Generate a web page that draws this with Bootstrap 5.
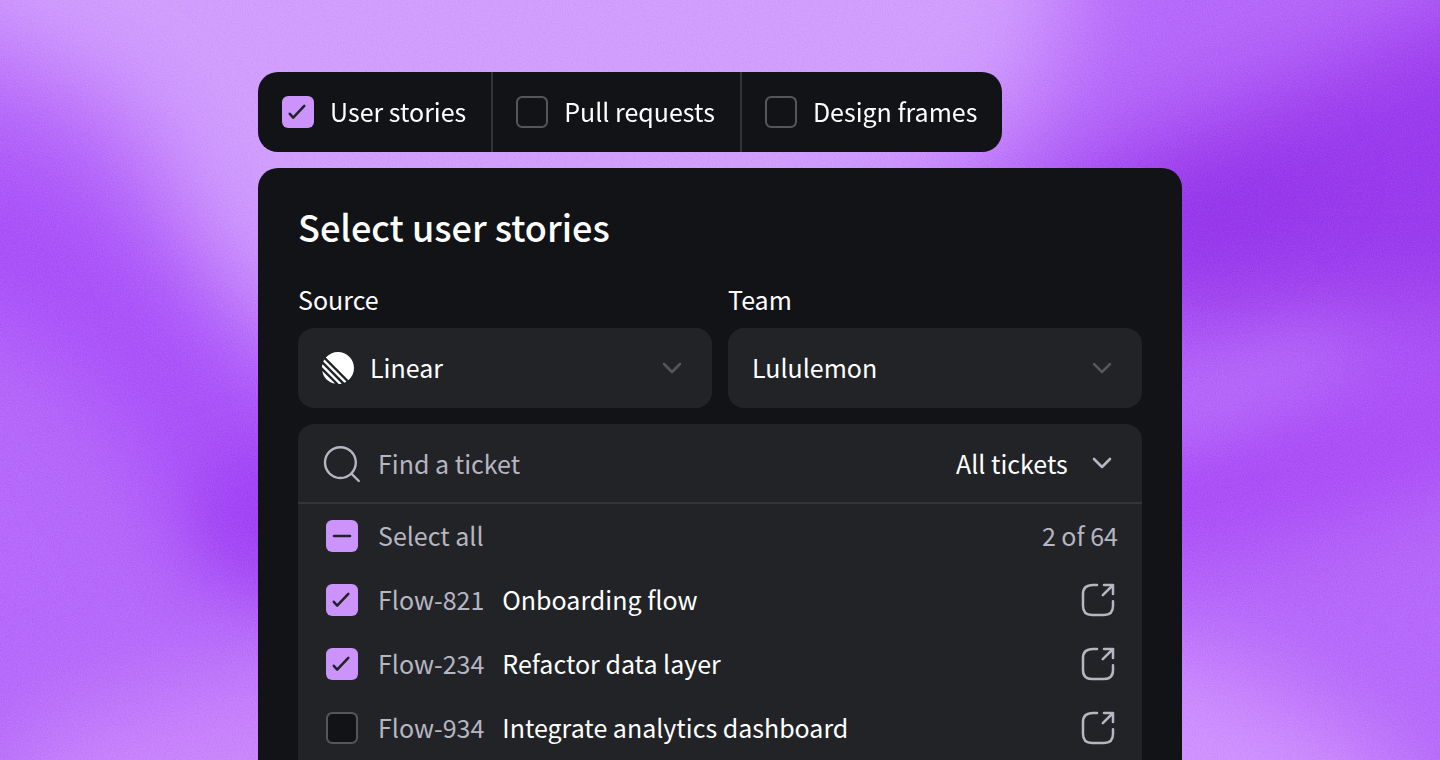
<!DOCTYPE html>
<html lang="en">
<head>
<meta charset="utf-8">
<meta name="viewport" content="width=device-width, initial-scale=1">
<title>Select user stories</title>
<link href="https://cdn.jsdelivr.net/npm/bootstrap@5.3.0/dist/css/bootstrap.min.css" rel="stylesheet">
<style>
  :root {
    --ink: #121317;
    --surface: #222326;
    --line: #333437;
    --outline: #56565a;
    --muted: #b6b5c2;
    --accent: #cc93fc;
  }
  body {
    font-family: "Noto Sans CJK SC", "Noto Sans", sans-serif;
    font-size: 25px;
    line-height: 32px;
    color: #fff;
    background: #b566f8;
  }
  .backdrop { position: fixed; inset: 0; width: 100%; height: 100%; z-index: -1; }
  .stage { max-width: 924px; padding-top: 72px; gap: 16px; }
  .ink { background: var(--ink); }
  .surface { background: var(--surface); }
  .text-soft { color: var(--muted); }

  .kind-tabs { border-radius: 20px; height: 80px; }
  .kind-tab { gap: 16px; padding: 0 25px 0 24px; cursor: pointer; }
  .kind-tab + .kind-tab { border-left: 2px solid var(--line); padding-left: 23px; }
  .kind-tab span, .ticket-row span, .ticket-row label { padding-bottom: 2px; }
  .ticket-row label span { padding-bottom: 0; }

  .form-check-input {
    width: 32px; height: 32px; margin: 0; flex: none;
    border: 2px solid var(--outline); border-radius: 8px;
    background-color: var(--ink);
    background-origin: border-box; background-size: 32px 32px;
  }
  .form-check-input:checked, .form-check-input:indeterminate {
    background-color: var(--accent); border-color: transparent; background-clip: border-box;
  }
  .form-check-input:checked[type=checkbox] {
    background-image: url("data:image/svg+xml,%3csvg xmlns='http://www.w3.org/2000/svg' viewBox='0 0 32 32'%3e%3cpath fill='none' stroke='%23222326' stroke-width='2.5' stroke-linecap='round' stroke-linejoin='round' d='M7.8 17.8 11.2 21.6 22.3 9.8'/%3e%3c/svg%3e");
  }
  .form-check-input:indeterminate[type=checkbox] {
    background-color: var(--accent); border-color: transparent;
    background-image: url("data:image/svg+xml,%3csvg xmlns='http://www.w3.org/2000/svg' viewBox='0 0 32 32'%3e%3cpath fill='none' stroke='%23222326' stroke-width='2.6' stroke-linecap='round' d='M8 16H24'/%3e%3c/svg%3e");
  }

  .picker { border-radius: 20px 20px 0 0; padding: 40px 40px 0; }
  .picker-title { font-size: 36px; line-height: 36px; font-weight: 500; margin-bottom: 39px; }
  .field-label { margin-bottom: 13px; }
  .field-box { border-radius: 16px; height: 80px; padding-left: 24px; gap: 16px; }

  .form-select {
    --bs-form-select-bg-img: url("data:image/svg+xml,%3csvg xmlns='http://www.w3.org/2000/svg' viewBox='0 0 32 32'%3e%3cpath fill='none' stroke='%2356565a' stroke-width='2.5' stroke-linecap='round' stroke-linejoin='round' d='M8 12 16 20 24 12'/%3e%3c/svg%3e");
    height: 80px; padding: 0 72px 2px 0; border: 0; border-radius: 16px;
    font-size: 25px; line-height: 32px; color: #fff;
    background-color: transparent;
    background-image: var(--bs-form-select-bg-img);
    background-position: right 24px center; background-size: 32px 32px;
  }
  .form-select option { background: var(--surface); }
  .filter-select {
    --bs-form-select-bg-img: url("data:image/svg+xml,%3csvg xmlns='http://www.w3.org/2000/svg' viewBox='0 0 32 32'%3e%3cpath fill='none' stroke='%23b6b5c2' stroke-width='2.6' stroke-linecap='round' stroke-linejoin='round' d='M8 12 16 20 24 12'/%3e%3c/svg%3e");
    padding: 0 74px 0 0;
  }

  .tickets { border-radius: 16px 16px 0 0; margin-top: 16px; }
  .ticket-search { height: 80px; border-bottom: 2px solid var(--line); padding-left: 24px; gap: 16px; }
  .ticket-search .form-control {
    padding: 0; border: 0; border-radius: 0; background: transparent; box-shadow: none;
    font-size: 25px; line-height: 32px; min-width: 0; color: #fff;
  }
  .ticket-search .form-control::placeholder { color: var(--muted); }
  .ticket-row { height: 64px; padding: 0 24px 0 28px; gap: 20px; }
  .ticket-label { gap: 18px; }
  .open-link { line-height: 0; color: var(--muted); }
</style>
</head>
<body class="overflow-hidden min-vh-100 d-flex flex-column">

<svg class="backdrop" viewBox="0 0 1440 760" preserveAspectRatio="none" aria-hidden="true">
  <defs>
    <filter id="soft" x="-60%" y="-60%" width="220%" height="220%" color-interpolation-filters="sRGB"><feGaussianBlur stdDeviation="50"/></filter>
    <filter id="softer" x="-60%" y="-60%" width="220%" height="220%" color-interpolation-filters="sRGB"><feGaussianBlur stdDeviation="30"/></filter>
    <filter id="grain" x="0" y="0" width="100%" height="100%" color-interpolation-filters="sRGB">
      <feTurbulence type="fractalNoise" baseFrequency="0.8" numOctaves="2" seed="4"/>
      <feColorMatrix values="1 0 0 0 0  1 0 0 0 0  1 0 0 0 0  0 0 0 0 1"/>
    </filter>
  </defs>
  <rect width="1440" height="760" fill="#b76afa"/>
  <g filter="url(#soft)">
    <path fill="#d19efd" d="M-100-140H1080L1060 60 960 180 700 300 330 380 210 260 130 110-100 0Z"/>
    <path fill="#a850f8" d="M-120 150 30 160 150 250 250 370 420 440 400 600 210 570 140 450 60 350-120 280Z"/>
    <path fill="#9a3bec" d="M1130 150 1300 80 1600-60V320L1340 320 1150 330 1000 240Z"/>
    <path fill="#a849f5" d="M1550 330 1300 410 1100 450V560L1260 540 1550 450Z"/>
    <path fill="#ca88fb" d="M-60 900 40 730 260 670 400 660V900Z"/>
    <path fill="#d094fd" d="M1060 640 1220 660 1400 770 1400 900H1060Z"/>
  </g>
  <g filter="url(#softer)">
    <path fill="#9b3af2" opacity=".6" d="M190 480 320 440V610L200 570Z"/>
    <path fill="#b971fb" opacity=".8" d="M1140 400 1330 330 1350 355 1220 430 1140 450Z"/>
    <path fill="#9334e8" opacity=".5" d="M1150 200 1300 150 1330 190 1210 250 1150 255Z"/>
  </g>
  <rect width="1440" height="760" filter="url(#grain)" opacity=".25" style="mix-blend-mode:soft-light"/>
</svg>

<main class="stage container-fluid px-0 d-flex flex-column flex-grow-1">
  <div class="kind-tabs ink d-flex align-self-start overflow-hidden" role="group" aria-label="Context">
    <label class="kind-tab d-flex align-items-center"><input class="form-check-input" type="checkbox" checked><span>User stories</span></label>
    <label class="kind-tab d-flex align-items-center"><input class="form-check-input" type="checkbox"><span>Pull requests</span></label>
    <label class="kind-tab d-flex align-items-center"><input class="form-check-input" type="checkbox"><span>Design frames</span></label>
  </div>

  <section class="picker ink flex-grow-1 d-flex flex-column">
    <h1 class="picker-title">Select user stories</h1>

    <div class="row gx-3">
      <div class="col-6">
        <label class="field-label d-block" for="source">Source</label>
        <div class="field-box surface d-flex align-items-center">
          <svg class="flex-shrink-0" width="32" height="32" viewBox="0 0 100 100" fill="#fff" aria-hidden="true"><path d="M1.225 61.523c-.222-.949.908-1.546 1.597-.857l36.512 36.512c.689.689.092 1.819-.857 1.597C20.052 94.452 5.548 79.949 1.225 61.523ZM.002 46.889c-.018.283.089.56.29.761l52.058 52.059c.201.2.478.307.761.289 2.369-.147 4.694-.46 6.962-.926.765-.157 1.03-1.096.478-1.648L2.576 39.449c-.552-.552-1.491-.287-1.648.478-.466 2.268-.778 4.593-.926 6.962ZM4.211 29.705c-.167.374-.082.811.208 1.1l64.776 64.776c.289.29.726.374 1.1.208 1.786-.796 3.517-1.693 5.185-2.684.552-.328.637-1.087.183-1.541L8.436 24.337c-.454-.454-1.213-.369-1.541.183-.991 1.668-1.888 3.399-2.684 5.185ZM12.659 18.074c-.37-.37-.393-.964-.045-1.354C21.78 6.459 35.111 0 49.952 0 77.593 0 100 22.407 100 50.048c0 14.841-6.459 28.172-16.72 37.338-.39.348-.984.325-1.354-.045L12.659 18.074Z"/></svg>
          <select class="form-select" id="source"><option>Linear</option></select>
        </div>
      </div>
      <div class="col-6">
        <label class="field-label d-block" for="team">Team</label>
        <div class="field-box surface d-flex align-items-center">
          <select class="form-select" id="team"><option>Lululemon</option></select>
        </div>
      </div>
    </div>

    <div class="tickets surface flex-grow-1">
      <div class="ticket-search d-flex align-items-center">
        <svg class="flex-shrink-0" width="40" height="40" viewBox="0 0 40 40" fill="none" stroke="#b6b5c2" stroke-width="2.4" stroke-linecap="round" aria-hidden="true"><circle cx="18.4" cy="19.6" r="15.4"/><path d="M29.4 30.6 36.8 38"/></svg>
        <input class="form-control flex-grow-1" type="search" placeholder="Find a ticket" aria-label="Find a ticket">
        <select class="form-select filter-select w-auto flex-shrink-0" aria-label="Filter"><option>All tickets</option></select>
      </div>
      <div class="ticket-row d-flex align-items-center text-soft">
        <input class="form-check-input" type="checkbox" id="all">
        <label class="flex-grow-1" for="all">Select all</label>
        <span>2 of 64</span>
      </div>
      <div class="ticket-row d-flex align-items-center">
        <input class="form-check-input" type="checkbox" id="t821" checked>
        <label class="ticket-label d-flex flex-grow-1" for="t821"><span class="text-soft">Flow-821</span><span>Onboarding flow</span></label>
        <a class="open-link" href="#t821" aria-label="Open Flow-821"><svg width="40" height="40" viewBox="0 0 40 40" fill="none" stroke="currentColor" stroke-width="2.5" stroke-linecap="round" stroke-linejoin="round"><path d="M19 5H15Q5 5 5 14V26Q5 35 14 35H26Q35 35 35 26V21.2M26 5H35V14M24.8 15.2 35 5"/></svg></a>
      </div>
      <div class="ticket-row d-flex align-items-center">
        <input class="form-check-input" type="checkbox" id="t234" checked>
        <label class="ticket-label d-flex flex-grow-1" for="t234"><span class="text-soft">Flow-234</span><span>Refactor data layer</span></label>
        <a class="open-link" href="#t234" aria-label="Open Flow-234"><svg width="40" height="40" viewBox="0 0 40 40" fill="none" stroke="currentColor" stroke-width="2.5" stroke-linecap="round" stroke-linejoin="round"><path d="M19 5H15Q5 5 5 14V26Q5 35 14 35H26Q35 35 35 26V21.2M26 5H35V14M24.8 15.2 35 5"/></svg></a>
      </div>
      <div class="ticket-row d-flex align-items-center">
        <input class="form-check-input" type="checkbox" id="t934">
        <label class="ticket-label d-flex flex-grow-1" for="t934"><span class="text-soft">Flow-934</span><span>Integrate analytics dashboard</span></label>
        <a class="open-link" href="#t934" aria-label="Open Flow-934"><svg width="40" height="40" viewBox="0 0 40 40" fill="none" stroke="currentColor" stroke-width="2.5" stroke-linecap="round" stroke-linejoin="round"><path d="M19 5H15Q5 5 5 14V26Q5 35 14 35H26Q35 35 35 26V21.2M26 5H35V14M24.8 15.2 35 5"/></svg></a>
      </div>
    </div>
  </section>
</main>

<script src="https://cdn.jsdelivr.net/npm/bootstrap@5.3.0/dist/js/bootstrap.bundle.min.js"></script>
<script>
  // Some tickets are picked, so the master box shows the mixed state.
  document.getElementById('all').indeterminate = true;
</script>
</body>
</html>
